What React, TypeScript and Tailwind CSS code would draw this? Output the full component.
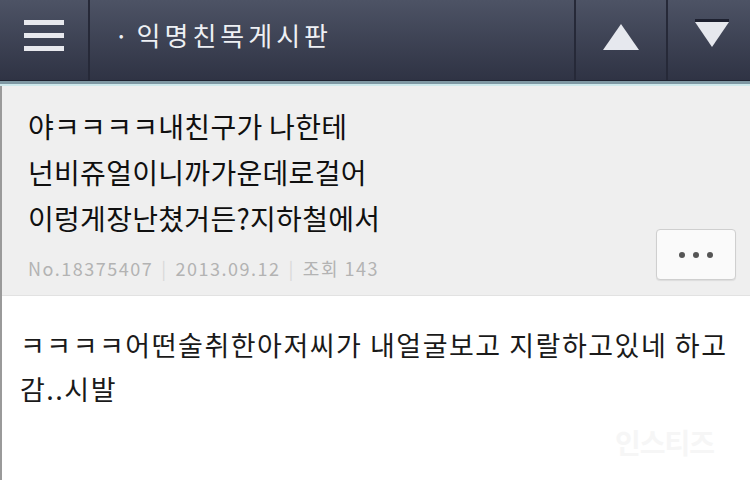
import React from "react";

const kr = { fontFamily: '"Noto Sans CJK KR", "Noto Sans", sans-serif' };

function Hamburger() {
  return (
    <div className="flex flex-col gap-[8px]">
      <div className="h-[5px] w-[40px] bg-[#e8e9ee]" />
      <div className="h-[5px] w-[40px] bg-[#e8e9ee]" />
      <div className="h-[5px] w-[40px] bg-[#e8e9ee]" />
    </div>
  );
}

export default function App() {
  return (
    <div className="w-[750px] h-[480px] overflow-hidden bg-white" style={kr}>
      {/* top navigation bar */}
      <div className="flex h-[81px] bg-gradient-to-b from-[#4d5365] to-[#2f3344] border-b border-[#1f2230]">
        <div className="w-[90px] shrink-0 flex items-center justify-center border-r-2 border-[#262938] pb-[10px]">
          <Hamburger />
        </div>
        <div className="flex-1 min-w-0 flex items-center pl-[24px] pb-[12px] text-[#eef0f4] text-[26px] tracking-[4px]">
          <span className="mr-[4px]">·</span>
          <span>익명친목게시판</span>
        </div>
        <div className="w-[92px] shrink-0 flex items-center justify-center border-l-2 border-[#262938] pb-[6px]">
          <svg width="38" height="28" viewBox="0 0 38 28">
            <polygon points="19,1 37,27 1,27" fill="#e6e8ee" />
          </svg>
        </div>
        <div className="w-[84px] shrink-0 flex items-center justify-center border-l-2 border-[#262938] pl-[6px] pb-[12px]">
          <svg width="36" height="30" viewBox="0 0 36 30">
            <rect x="1" y="0" width="34" height="3" fill="#1e2130" />
            <polygon points="1,3 35,3 18,28" fill="#e6e8ee" />
          </svg>
        </div>
      </div>
      <div className="h-[3px] bg-[#7f98a3]" />
      <div className="h-[2px] bg-[#cfe9ec]" />

      <div className="border-l-2 border-[#9a9a9a]">
        {/* post header */}
        <div className="bg-[#efefef] pt-[17px] pb-[9px] pl-[26px] pr-[14px] border-b border-[#e2e2e2]">
          <div className="text-[28px] leading-[46px] text-[#101010] tracking-[0.3px]">
            <div>야ㅋㅋㅋㅋ내친구가 나한테</div>
            <div>넌비쥬얼이니까가운데로걸어</div>
            <div>이렁게장난쳤거든?지하철에서</div>
          </div>
          <div className="flex items-end justify-between -mt-[12px]">
            <div className="flex items-center text-[18px] text-[#b3b3b3] tracking-[1.5px] pb-[4px]">
              <span>No.18375407</span>
              <span className="mx-[8px] text-[#d9d9d9]">|</span>
              <span>2013.09.12</span>
              <span className="mx-[8px] text-[#d9d9d9]">|</span>
              <span>조회 143</span>
            </div>
            <div className="w-[80px] h-[51px] mb-[6px] rounded-[4px] border border-[#cfcfcf] bg-[#fafafa] shadow-[0_1px_1px_rgba(0,0,0,0.08)] flex items-center justify-center gap-[8px]">
              <span className="w-[6px] h-[6px] rounded-full bg-[#555]" />
              <span className="w-[6px] h-[6px] rounded-full bg-[#555]" />
              <span className="w-[6px] h-[6px] rounded-full bg-[#555]" />
            </div>
          </div>
        </div>

        {/* post body */}
        <div className="relative h-[200px] pt-[27px] pl-[18px] text-[27px] leading-[44px] text-[#1a1a1a] tracking-[1.5px]">
          <div className="whitespace-nowrap">ㅋㅋㅋㅋ어떤술취한아저씨가 내얼굴보고 지랄하고있네 하고</div>
          <div>감..시발</div>
          <div className="absolute right-[36px] top-[124px] text-[28px] font-bold text-[#f6f6f6] tracking-[-1px]">
            인스티즈
          </div>
        </div>
      </div>
    </div>
  );
}
